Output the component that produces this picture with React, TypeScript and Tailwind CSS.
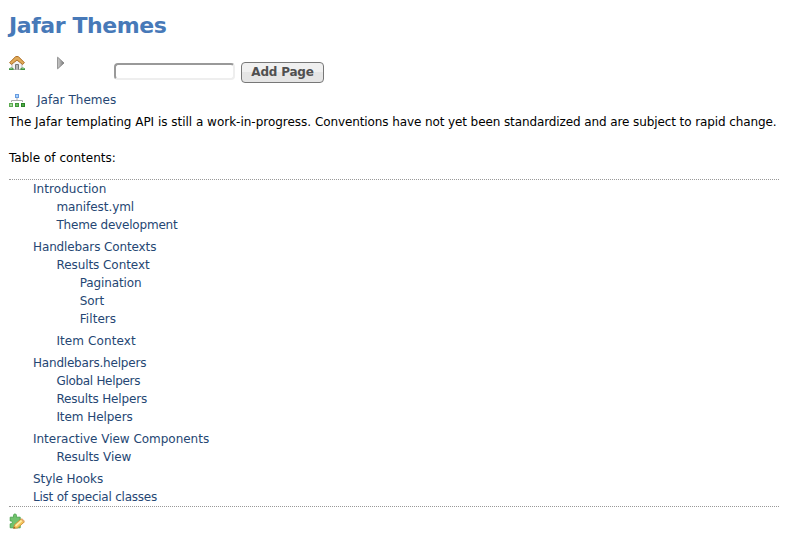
type Entry = { label: string; tracking?: string; children?: Entry[] };

const contents: Entry[] = [
  {
    label: "Introduction",
    tracking: "tracking-[0.06px]",
    children: [{ label: "manifest.yml" }, { label: "Theme development", tracking: "tracking-[-0.19px]" }],
  },
  {
    label: "Handlebars Contexts",
    tracking: "tracking-[-0.12px]",
    children: [
      {
        label: "Results Context",
        children: [
          { label: "Pagination", tracking: "tracking-[-0.12px]" },
          { label: "Sort" },
          { label: "Filters", tracking: "tracking-[0.06px]" },
        ],
      },
      { label: "Item Context", tracking: "tracking-[0.1px]" },
    ],
  },
  {
    label: "Handlebars.helpers",
    tracking: "tracking-[-0.2px]",
    children: [
      { label: "Global Helpers", tracking: "tracking-[-0.3px]" },
      { label: "Results Helpers", tracking: "tracking-[-0.16px]" },
      { label: "Item Helpers" },
    ],
  },
  { label: "Interactive View Components", tracking: "tracking-[-0.02px]", children: [{ label: "Results View" }] },
  { label: "Style Hooks" },
  { label: "List of special classes", tracking: "tracking-[-0.23px]" },
];

function EntryList({ entries, nested = false }: { entries: Entry[]; nested?: boolean }) {
  return (
    <ul className={nested ? "mb-1 pl-[23.4px]" : "pl-6"}>
      {entries.map((e) => (
        <li key={e.label}>
          <a href="#" className={`block w-fit ${e.tracking ?? "tracking-[-0.063px]"}`}>{e.label}</a>
          {e.children && <EntryList entries={e.children} nested />}
        </li>
      ))}
    </ul>
  );
}

function HomeIcon() {
  return (
    <svg width="16" height="16" viewBox="0 0 16 16">
      <path d="M3 7.5 8 3l5 4.5V14.5H3z" fill="#f4f3f3" stroke="#a5a3a3" strokeWidth=".8" />
      <path d="M6.5 14.5V9.5h3v5" fill="#b5b5b5" stroke="#777" />
      <path d="M.6 7.6 6.7 1.5h2.6l6.1 6.1-1.7 1.9L8 5.2 2.3 9.5z" fill="#dda452" stroke="#a96a22" strokeWidth=".9" strokeLinejoin="round" />
      <path d="m2.2 8 5-4.6h1.6l5 4.6" fill="none" stroke="#e6b264" strokeWidth=".8" />
      <path d="M0 15v-1.5q2.4-2 4.6 0V15zM11.4 15v-1.5q2.2-2 4.6 0V15z" fill="#459447" />
      <path d="M1 13.4h2.2M12.8 13.4H15" stroke="#83c77b" />
    </svg>
  );
}

function SitemapIcon() {
  return (
    <svg width="16" height="16" viewBox="0 0 16 16">
      <path d="M8 5v2.5M2.5 9V7.5h11V9" fill="none" stroke="#aaa" strokeWidth="1" />
      <rect x="6.5" y="1.5" width="3" height="3" fill="#a9d4ff" stroke="#689bdf" />
      <rect x=".5" y="10.5" width="3" height="3" fill="#a0d994" stroke="#5dab53" />
      <rect x="6.5" y="10.5" width="3" height="3" fill="#6dbd62" stroke="#40983a" />
      <rect x="12.5" y="10.5" width="3" height="3" fill="#50a846" stroke="#2a8428" />
    </svg>
  );
}

function ArrowIcon() {
  return (
    <svg width="8" height="14" viewBox="0 0 8 14">
      <defs>
        <linearGradient id="arrow" x1="0" x2="1">
          <stop offset="0" stopColor="#d2d2d2" />
          <stop offset="1" stopColor="#777" />
        </linearGradient>
      </defs>
      <path d="M.6 1.2 7 7 .6 12.8z" fill="url(#arrow)" stroke="#858585" strokeWidth=".9" />
    </svg>
  );
}

function PluginEditIcon() {
  return (
    <svg width="16" height="16" viewBox="0 0 16 16">
      <path
        d="M1.2 4.2h3.6c-1.7-4.4 4-4.4 2.4 0h4v3.4c4-1.4 4 3.8 0 2.6v4.6H1.2v-4c2.8.5 2.8-3.4 0-2.8z"
        fill="#72c36e"
        stroke="#4aa34c"
        strokeWidth=".9"
      />
      <path d="m4.6 15.4.9-3.6 6.6-5.9 3.3 3-6.8 6z" fill="#f5c65c" stroke="#cc8a32" strokeWidth=".8" />
      <path d="m6.6 12.9 6-5.3" stroke="#fff0aa" strokeWidth="1.6" />
      <path d="m11.8 6.3 1.2-1 2.8 2.6-1.1 1.3z" fill="#e5a96d" />
      <path d="m4.4 15.6.5-1.9 1.5 1.4z" fill="#83502a" />
    </svg>
  );
}

export default function App() {
  return (
    <main className="h-[549px] w-[792px] bg-white pl-[9px] pr-[13px] pt-[11px] font-['DejaVu_Sans','Verdana',sans-serif] text-[12px] leading-[18px] tracking-[-0.063px] text-[#254673]">
      <h1 className="text-[22px] font-bold leading-[29px] tracking-[-0.42px] text-[#4779b8]">Jafar Themes</h1>
      <div className="mt-[15px] flex h-[36px] items-start">
        <a href="#" aria-label="Home"><HomeIcon /></a>
        <div className="ml-[32px] mt-[1px]"><ArrowIcon /></div>
        <form className="ml-[49px] mt-[7px] flex items-start">
          <input className="mt-[1px] h-[17px] w-[121px] rounded-[4px] border-2 border-b-[#eee] border-l-[#999] border-r-[#eee] border-t-[#999] bg-white outline-none" />
          <button type="button" className="ml-[6px] flex h-[21px] w-[83px] items-start justify-center rounded-[4px] border border-[#777] bg-linear-to-b from-[#f0f0f0] from-50% to-[#e5e5e5] to-50% text-[12px] font-bold leading-[18px] tracking-[-0.2px] text-[#505050]">
            Add Page
          </button>
        </form>
      </div>
      <div className="flex h-[22px] items-start gap-[12px]">
        <div className="mt-[2px]"><SitemapIcon /></div>
        <a href="#" className="tracking-[0.03px]">Jafar Themes</a>
      </div>
      <p className="whitespace-nowrap text-black">
        <span className="tracking-[-0.015px]">The Jafar templating API is still a work-in-progress. </span>
        <span className="tracking-[-0.1px]">Conventions have not yet been standardized and are subject to rapid change.</span>
      </p>
      <p className="mt-[18px] tracking-[0.02px] text-black">Table of contents:</p>
      <nav className="mt-[12px] border-y border-dotted border-[#999]">
        <EntryList entries={contents} />
      </nav>
      <a href="#" aria-label="Edit page" className="mt-[6px] block w-4"><PluginEditIcon /></a>
    </main>
  );
}
